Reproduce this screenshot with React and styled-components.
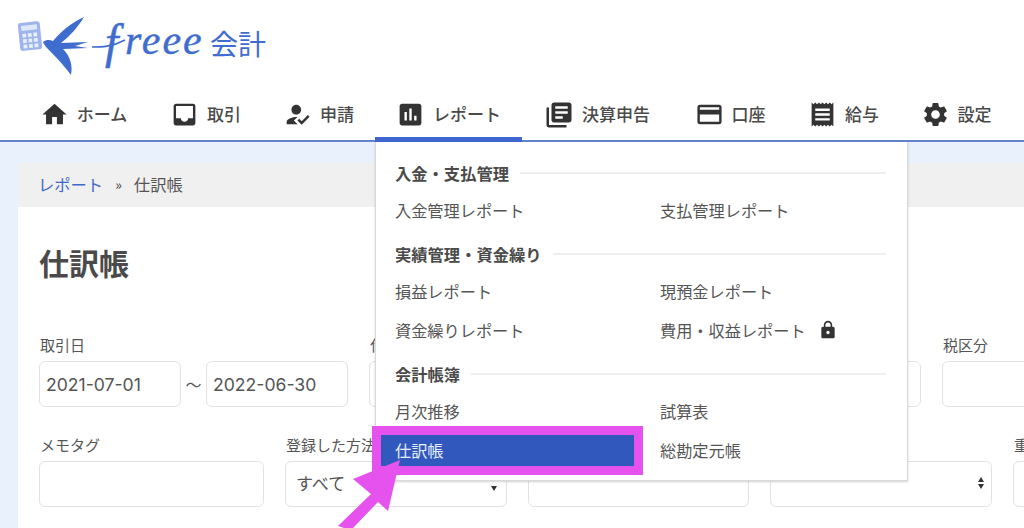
import React from "react";
import styled, { createGlobalStyle } from "styled-components";
import {
  MdHome, MdInbox, MdHowToReg, MdAssessment, MdLibraryBooks,
  MdCreditCard, MdReceipt, MdSettings, MdLock,
} from "react-icons/md";

const JP = `"Noto Sans CJK JP", "Noto Sans", sans-serif`;

const Global = createGlobalStyle`
  html, body { margin: 0; padding: 0; height: 528px; overflow: hidden; background: #e9f1fd; }
  * { box-sizing: border-box; }
  body { font-family: ${JP}; color: #555; }
`;

const Page = styled.div`
  position: relative;
  width: 1024px;
  height: 528px;
  overflow: hidden;
`;

const Header = styled.header`
  background: #fff;
  height: 142px;
  border-bottom: 2px solid #6284cf;
  display: flex;
  flex-direction: column;
`;

const LogoRow = styled.div`
  height: 95px;
  padding: 15px 0 0 17px;
  display: flex;
  align-items: flex-start;
`;

const LogoMark = styled.svg`
  display: block;
  width: 260px;
  height: 65px;
  overflow: visible;
`;

const Nav = styled.nav`
  display: flex;
  padding-left: 18px;
  height: 45px;
`;

const Tab = styled.div`
  width: ${(p) => p.$w}px;
  height: 47px;
  display: flex;
  align-items: flex-start;
  justify-content: center;
  gap: 8px;
  padding-top: 5px;
  font-size: 17px;
  font-weight: 500;
  line-height: 28px;
  color: #4a4a4a;
  border-bottom: 5px solid ${(p) => (p.$active ? "#3e68d0" : "transparent")};
  svg { flex: none; color: #333; }
`;

const Main = styled.main`
  margin: 21px 0 0 18px;
  height: 400px;
  background: #fff;
`;

const Crumbs = styled.div`
  height: 44px;
  background: #f0f0f0;
  padding: 0 0 3px 21px;
  display: flex;
  align-items: center;
  font-size: 16.3px;
  color: #555;
`;

const CrumbLink = styled.span`
  color: #3f69c8;
  margin-left: -1px;
`;

const CrumbSep = styled.span`
  margin: 0 12px;
  font-size: 14px;
  color: #444;
`;

const Body = styled.div`
  padding: 0 0 0 21px;
`;

const Title = styled.h1`
  margin: 0;
  padding-top: 31px;
  height: 130px;
  font-size: 30px;
  line-height: 48px;
  font-weight: 700;
  color: #4a4a4a;
`;

const Row = styled.div`
  display: flex;
  gap: 21px;
  margin-bottom: 30px;
`;

const Field = styled.div`
  width: ${(p) => p.$w}px;
  flex: none;
`;

const Label = styled.div`
  height: 24px;
  font-size: 15px;
  line-height: 16px;
  padding-left: 1px;
  color: #555;
  white-space: nowrap;
`;

const Input = styled.div`
  position: relative;
  width: ${(p) => (p.$w ? `${p.$w}px` : "100%")};
  height: 46px;
  border: 1px solid #e2e2e2;
  border-radius: 6px;
  background: #fff;
  display: flex;
  align-items: center;
  padding-left: 6px;
  font-size: 17.6px;
  color: #555;
  font-family: "Inter", ${JP};
`;

const SelectBox = styled(Input)`
  padding: 0 0 3px 10px;
  font-size: 17px;
  font-family: ${JP};
`;

const Range = styled.div`
  display: flex;
  align-items: center;
`;

const Tilde = styled.span`
  width: 25px;
  text-align: center;
  font-size: 16px;
`;

const Caret = styled.span`
  position: absolute;
  right: 9px;
  top: 24px;
  width: 0;
  height: 0;
  border-left: 3.5px solid transparent;
  border-right: 3.5px solid transparent;
  border-top: 5px solid #333;
`;

const UpDown = styled.span`
  position: absolute;
  right: 7px;
  top: 15px;
  display: flex;
  flex-direction: column;
  gap: 2px;
  &::before, &::after {
    content: "";
    width: 0;
    height: 0;
    border-left: 3.5px solid transparent;
    border-right: 3.5px solid transparent;
  }
  &::before { border-bottom: 5px solid #333; }
  &::after { border-top: 5px solid #333; }
`;

const Menu = styled.div`
  position: absolute;
  left: 375px;
  top: 142px;
  width: 533px;
  height: 339px;
  background: #fff;
  border: 1px solid #d9d9d9;
  border-top: none;
  box-shadow: 0 1px 2px rgba(0, 0, 0, 0.18);
  padding: 19px 21px 0 19px;
`;

const SectionHead = styled.div`
  display: flex;
  align-items: center;
  gap: 11px;
  height: 24px;
  margin-top: ${(p) => p.$mt ?? 0}px;
  font-size: 16.3px;
  font-weight: 700;
  line-height: 24px;
  color: #4a4a4a;
  &::after {
    content: "";
    flex: 1;
    height: 2px;
    background: #efefef;
  }
`;

const Items = styled.div`
  display: grid;
  grid-template-columns: 265px 1fr;
  grid-auto-rows: 39px;
  padding-top: ${(p) => p.$pt ?? 5}px;
`;

const Item = styled.div`
  display: flex;
  align-items: center;
  gap: 12px;
  font-size: 16.2px;
  color: #555;
  white-space: nowrap;
  svg { color: #333; }
`;

const Selected = styled.div`
  position: absolute;
  left: 372px;
  top: 426px;
  width: 271px;
  height: 49px;
  border: 9px solid #e652ee;
  background: #3159bd;
  color: #e8eefb;
  font-size: 16.2px;
  line-height: 31px;
  padding-left: 14px;
`;

const Arrow = styled.svg`
  position: absolute;
  left: 330px;
  top: 455px;
  width: 80px;
  height: 73px;
`;

const tabs = [
  [131, MdHome, "ホーム", 29],
  [113, MdInbox, "取引", 29],
  [113, MdHowToReg, "申請", 29],
  [147, MdAssessment, "レポート", 29, true],
  [150, MdLibraryBooks, "決算申告", 30],
  [116, MdCreditCard, "口座", 29],
  [111, MdReceipt, "給与", 29],
  [114, MdSettings, "設定", 29],
];

const sections = [
  ["入金・支払管理", 0, 5, [["入金管理レポート"], ["支払管理レポート"]]],
  ["実績管理・資金繰り", 13, 5, [["損益レポート"], ["現預金レポート"], ["資金繰りレポート"], ["費用・収益レポート", true]]],
  ["会計帳簿", 13, 5, [["月次推移"], ["試算表"], [""], ["総勘定元帳"]]],
];

export default function App() {
  return (
    <Page>
      <Global />
      <Header>
        <LogoRow>
          <LogoMark viewBox="0 0 260 65">
            <g transform="rotate(-6 14 21)">
              <rect x="2" y="7" width="22" height="28" rx="3" fill="#9db5ea" />
              <rect x="5" y="10" width="16" height="5" fill="#dfe8fa" />
              {[0, 1, 2].map((r) =>
                [0, 1, 2].map((c) => (
                  <rect key={`${r}${c}`} x={5.5 + c * 5.5} y={18 + r * 5.5} width="3.8" height="3.8" fill="#e6edfb" />
                ))
              )}
            </g>
            <path
              d="M26 27 C30 24 33 25 36 26 C46 14 56 7 67 2 C61 12 53 21 44 28 L71 27 L58 31 L71 33 L46 34 C53 41 56 50 54 60 C46 49 37 40 30 33 C28 31 27 29 26 27 Z"
              fill="#3f6ccf"
            />
            <path d="M75 32 C84 32 95 32 108 25" stroke="#3f6ccf" strokeWidth="1.6" fill="none" />
            <text x="88" y="43" fontFamily="'Liberation Serif', serif" fontStyle="italic" fontSize="48" fill="#3f6ccf" stroke="#3f6ccf" strokeWidth="0.5">f</text>
            <text x="108" y="39" fontFamily="'Liberation Serif', serif" fontStyle="italic" fontSize="42" letterSpacing="2" fill="#3f6ccf" stroke="#3f6ccf" strokeWidth="0.4">reee</text>
            <text x="193" y="40" fontFamily={JP} fontSize="28" fill="#3f6ccf">会計</text>
          </LogoMark>
        </LogoRow>
        <Nav>
          {tabs.map(([w, Icon, label, size, active]) => (
            <Tab key={label} $w={w} $active={active}>
              <Icon size={size} />
              <span>{label}</span>
            </Tab>
          ))}
        </Nav>
      </Header>
      <Main>
        <Crumbs>
          <CrumbLink>レポート</CrumbLink>
          <CrumbSep>»</CrumbSep>
          <span>仕訳帳</span>
        </Crumbs>
        <Body>
          <Title>仕訳帳</Title>
          <Row>
            <Field $w={309}>
              <Label>取引日</Label>
              <Range>
                <Input $w={142}>2021-07-01</Input>
                <Tilde>〜</Tilde>
                <Input $w={142}>2022-06-30</Input>
              </Range>
            </Field>
            <Field $w={552}>
              <Label>仕訳番号</Label>
              <Input />
            </Field>
            <Field $w={222}>
              <Label>税区分</Label>
              <Input />
            </Field>
          </Row>
          <Row>
            <Field $w={225}>
              <Label>メモタグ</Label>
              <Input />
            </Field>
            <Field $w={222}>
              <Label>登録した方法</Label>
              <SelectBox>
                すべて
                <Caret />
              </SelectBox>
            </Field>
            <Field $w={221}>
              <Label>備考</Label>
              <Input />
            </Field>
            <Field $w={222}>
              <Label>決算整理仕訳</Label>
              <Input>
                <UpDown />
              </Input>
            </Field>
            <Field $w={222}>
              <Label>重複</Label>
              <Input />
            </Field>
          </Row>
        </Body>
      </Main>
      <Menu>
        {sections.map(([head, mt, pt, items]) => (
          <div key={head}>
            <SectionHead $mt={mt}>{head}</SectionHead>
            <Items $pt={pt}>
              {items.map(([text, locked], i) => (
                <Item key={i}>
                  {text}
                  {locked && <MdLock size={20} />}
                </Item>
              ))}
            </Items>
          </div>
        ))}
      </Menu>
      <Selected>仕訳帳</Selected>
      <Arrow viewBox="330 455 80 73">
        <polygon points="400,460 353,479 371,494 338,526 344,528 353,528 378,502 388,511" fill="#e652ee" />
      </Arrow>
    </Page>
  );
}
